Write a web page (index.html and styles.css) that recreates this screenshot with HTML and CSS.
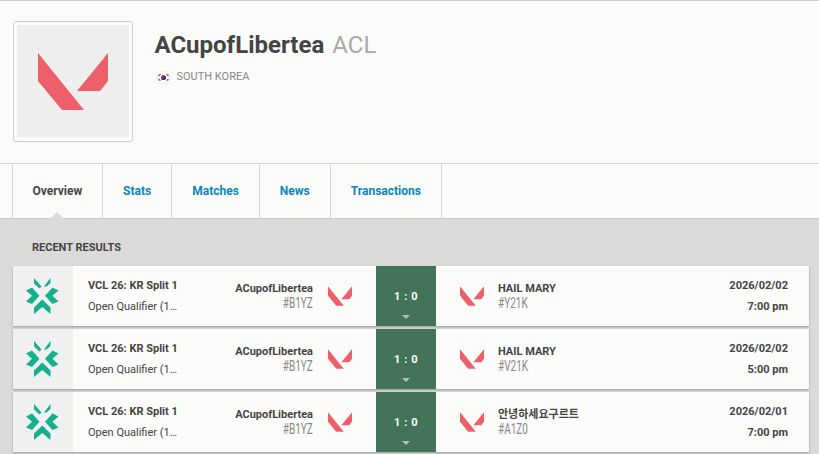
FILE: index.html
```html
<!DOCTYPE html>
<html lang="en">
<head>
<meta charset="utf-8">
<title>ACupofLibertea</title>
<link rel="stylesheet" href="styles.css">
</head>
<body>
<svg class="defs" width="0" height="0" aria-hidden="true">
  <defs>
    <symbol id="val" viewBox="0 0 70 57">
      <path d="M0 0V28L24 57H46Z M70 0V28L62 38H39Z" fill="#ed5f6b"/>
    </symbol>
    <symbol id="vcl" viewBox="0 0 34 36">
      <path fill="#17b08f" d="M8 0L15.500 8.500L13.500 10.500L8 5.500Z M24.500 0V5L20.500 8.500H18Z M0 12.500L6 9.500L13.500 17.700L6 26L0 23.500L6 17.700Z M32.500 12.500L26.500 9.500L19 17.700L26.500 26L32.500 23.500L26.500 17.700Z M8 29.500L16.300 21.500L24.500 29.500V36L16.300 29L8 36Z"/>
    </symbol>
  </defs>
</svg>
<header class="profile">
  <div class="avatar"><div class="avatar-inner"><svg class="avatar-logo"><use href="#val"/></svg></div></div>
  <div class="info">
    <h1 class="title">ACupofLibertea <span class="tag">ACL</span></h1>
    <div class="country">
      <svg class="flag" viewBox="0 0 14 10">
        <rect width="14" height="10" fill="#fff"/>
        <circle cx="7" cy="5" r="2.700" fill="#cd2e3a"/>
        <path d="M4.300 5a2.700 2.700 0 0 0 5.400 0a1.350 1.350 0 0 0-2.700 0a1.350 1.350 0 0 1-2.700 0Z" fill="#0047a0"/>
        <path d="M1 3L3 1M1.800 3.700L3.800 1.700M10.200 1.700L12.200 3.700M11 1L13 3M1 7L3 9M1.800 6.300L3.800 8.300M10.200 8.300L12.200 6.300M11 9L13 7" stroke="#222" stroke-width=".8"/>
      </svg>
      <span>SOUTH KOREA</span>
    </div>
  </div>
</header>
<nav class="tabs">
  <a class="tab active">Overview</a>
  <a class="tab">Stats</a>
  <a class="tab">Matches</a>
  <a class="tab">News</a>
  <a class="tab">Transactions</a>
</nav>
<main class="content">
  <h2 class="section">RECENT RESULTS</h2>
  <div class="results">
    <article class="card">
      <div class="event-logo"><svg class="vcl"><use href="#vcl"/></svg></div>
      <div class="event"><div class="event-name">VCL 26: KR Split 1</div><div class="event-sub">Open Qualifier (1…</div></div>
      <div class="team left"><div class="team-text"><div class="team-name">ACupofLibertea</div><div class="team-id">#B1YZ</div></div><svg class="team-logo"><use href="#val"/></svg></div>
      <div class="score"><span>1 : 0</span><i class="caret"></i></div>
      <div class="team right"><svg class="team-logo"><use href="#val"/></svg><div class="team-text"><div class="team-name">HAIL MARY</div><div class="team-id">#Y21K</div></div></div>
      <div class="when"><div>2026/02/02</div><div>7:00 pm</div></div>
    </article>
    <article class="card">
      <div class="event-logo"><svg class="vcl"><use href="#vcl"/></svg></div>
      <div class="event"><div class="event-name">VCL 26: KR Split 1</div><div class="event-sub">Open Qualifier (1…</div></div>
      <div class="team left"><div class="team-text"><div class="team-name">ACupofLibertea</div><div class="team-id">#B1YZ</div></div><svg class="team-logo"><use href="#val"/></svg></div>
      <div class="score"><span>1 : 0</span><i class="caret"></i></div>
      <div class="team right"><svg class="team-logo"><use href="#val"/></svg><div class="team-text"><div class="team-name">HAIL MARY</div><div class="team-id">#V21K</div></div></div>
      <div class="when"><div>2026/02/02</div><div>5:00 pm</div></div>
    </article>
    <article class="card">
      <div class="event-logo"><svg class="vcl"><use href="#vcl"/></svg></div>
      <div class="event"><div class="event-name">VCL 26: KR Split 1</div><div class="event-sub">Open Qualifier (1…</div></div>
      <div class="team left"><div class="team-text"><div class="team-name">ACupofLibertea</div><div class="team-id">#B1YZ</div></div><svg class="team-logo"><use href="#val"/></svg></div>
      <div class="score"><span>1 : 0</span><i class="caret"></i></div>
      <div class="team right"><svg class="team-logo"><use href="#val"/></svg><div class="team-text"><div class="team-name">안녕하세요구르트</div><div class="team-id">#A1Z0</div></div></div>
      <div class="when"><div>2026/02/01</div><div>7:00 pm</div></div>
    </article>
  </div>
</main>
</body>
</html>
```
FILE: styles.css
```css
* { box-sizing: border-box; }
html, body { margin: 0; height: 100%; overflow: hidden; }
body {
  width: 819px;
  height: 454px;
  background: #dadad9;
  font-family: Roboto, "Noto Sans CJK KR", sans-serif;
  color: #444;
}
.defs { display: block; height: 0; }
.profile {
  height: 163px;
  padding: 20px 13px 0;
  display: flex;
  background: #fbfbf9;
  border-top: 1px solid #ccc;
}
.avatar {
  width: 120px;
  height: 121px;
  padding: 3px;
  background: #fbfbf9;
  border: 1px solid #ccc;
  border-radius: 3px;
}
.avatar-inner {
  width: 112px;
  height: 112px;
  background: #eee;
  display: flex;
  align-items: center;
  justify-content: center;
}
.avatar-logo { width: 70px; height: 57px; }
.info { margin-left: 21.500px; padding-top: 10px; }
.title {
  margin: 0;
  font-size: 24px;
  line-height: 28px;
  font-weight: 700;
  color: #444;
}
.tag { font-weight: 400; color: #aaa; margin-left: 2px; }
.country {
  display: flex;
  align-items: center;
  margin-top: 11px;
  margin-left: 2px;
  font-size: 11px;
  line-height: 14px;
  color: #888;
}
.flag { width: 13px; height: 11px; margin-right: 7px; box-shadow: 0 0 1px #ccc; }
.tabs {
  height: 56px;
  padding-left: 12px;
  display: flex;
  background: #fbfbf9;
  border-top: 1px solid #d5d5d5;
  border-bottom: 1px solid #ccc;
}
.tab {
  position: relative;
  padding: 0 20px;
  border-left: 1px solid #d5d5d5;
  font-size: 12px;
  font-weight: 700;
  line-height: 54px;
  color: #0a85c2;
}
.tab:last-child { border-right: 1px solid #d5d5d5; }
.tab.active { color: #444; padding: 0 19.800px 0 19.500px; }
.tab.active::after {
  content: "";
  position: absolute;
  left: 37px;
  bottom: -1px;
  border: 7px solid transparent;
  border-top: 0;
  border-bottom-color: #dadad9;
}
.content { padding: 0 10px 0 13px; }
.section {
  margin: 0;
  padding: 22px 0 12px 19px;
  font-size: 11px;
  line-height: 13px;
  font-weight: 700;
  color: #444;
}
.results { display: flex; flex-direction: column; gap: 3px; }
.card {
  display: flex;
  height: 60px;
  background: #fbfbf9;
  box-shadow: 0 1px 2px rgba(0, 0, 0, .3);
}
.event-logo {
  width: 60px;
  flex: none;
  display: flex;
  align-items: center;
  justify-content: center;
  background: #f0f0f0;
}
.vcl { width: 34px; height: 36px; }
.event { width: 149px; flex: none; padding: 13px 0 0 15px; font-size: 11px; }
.event-name { font-weight: 700; line-height: 14px; }
.event-sub { margin-top: 7px; line-height: 14px; }
.team { width: 154px; flex: none; display: flex; align-items: center; }
.team.left { justify-content: flex-end; padding-right: 24px; }
.team.right { width: 262px; padding-left: 24px; }
.team-logo { width: 24px; height: 20px; flex: none; margin-bottom: 1px; }
.team.left .team-logo { margin-left: 15px; }
.team.right .team-logo { margin-right: 14px; }
.team-name { font-size: 11px; line-height: 14px; font-weight: 700; padding-top: 1px; }
.team.left .team-text { text-align: right; }
.team-id {
  font-size: 14.500px;
  line-height: 15px;
  color: #888;
  transform: scaleX(.69);
}
.team.left .team-id { transform-origin: right; }
.team.right .team-id { transform-origin: left; }
.score {
  width: 60px;
  flex: none;
  position: relative;
  display: flex;
  align-items: center;
  justify-content: center;
  background: #437359;
  color: #fff;
  font-size: 11px;
  font-weight: 700;
  letter-spacing: .6px;
}
.caret {
  position: absolute;
  left: 26px;
  bottom: 7px;
  border: 4px solid transparent;
  border-bottom: 0;
  border-top-color: #bbb;
}
.when {
  flex: 1;
  padding: 13px 21px 0 0;
  text-align: right;
  font-size: 11px;
  line-height: 14px;
  font-weight: 700;
}
.when div + div { margin-top: 7px; }
```
